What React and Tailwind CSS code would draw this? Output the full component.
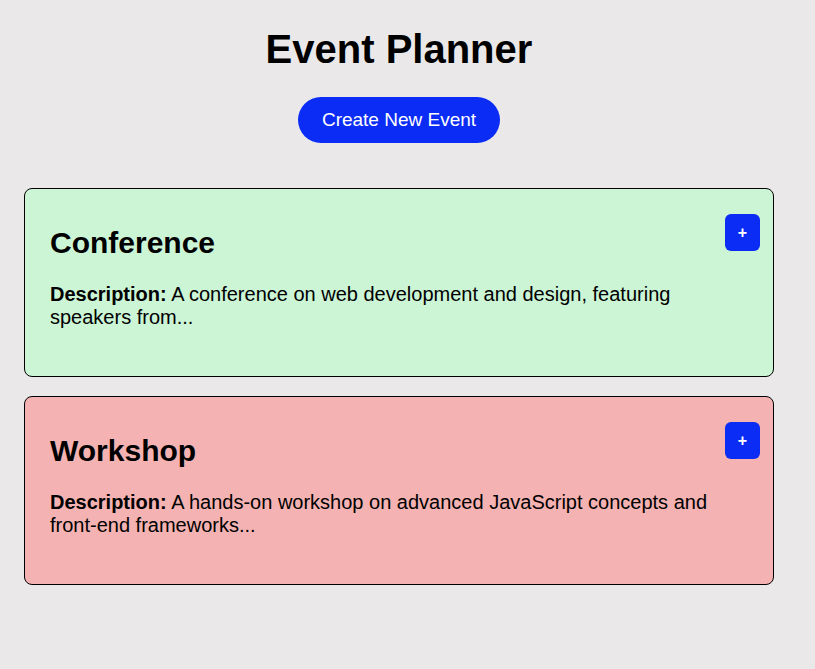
import React from "react";

const events = [
  {
    title: "Conference",
    desc: "A conference on web development and design, featuring speakers from...",
    bg: "bg-[#ccf5d6]",
  },
  {
    title: "Workshop",
    desc: "A hands-on workshop on advanced JavaScript concepts and front-end frameworks...",
    bg: "bg-[#f4b3b2]",
  },
];

export default function App() {
  return (
    <div className="min-h-screen bg-[#eae8e9] text-black font-['Liberation_Sans',Arial,sans-serif]">
      <div className="w-[798px] px-6 pt-[26px] flex flex-col items-center">
        <h1 className="text-[40px] leading-[46px] font-bold">Event Planner</h1>
        <button className="mt-[25px] h-[46px] px-6 rounded-full bg-[#0a2cf5] text-white text-[19px] leading-[22px]">
          Create New Event
        </button>
        <div className="mt-[45px] w-full flex flex-col gap-[19px]">
          {events.map((e) => (
            <div
              key={e.title}
              className={`relative h-[189px] w-full rounded-lg border border-black ${e.bg} pl-[25px] pr-6 pt-6`}
            >
              <button className="absolute top-[25px] right-[13px] w-[35px] h-[37px] rounded-md bg-[#0a2cf5] text-white text-[16px] font-bold flex items-center justify-center">
                +
              </button>
              <h2 className="mt-3 text-[30px] leading-[36px] font-bold">{e.title}</h2>
              <p className="mt-[22px] text-[20px] leading-[23px] pr-10">
                <span className="font-bold">Description:</span> {e.desc}
              </p>
            </div>
          ))}
        </div>
      </div>
    </div>
  );
}
